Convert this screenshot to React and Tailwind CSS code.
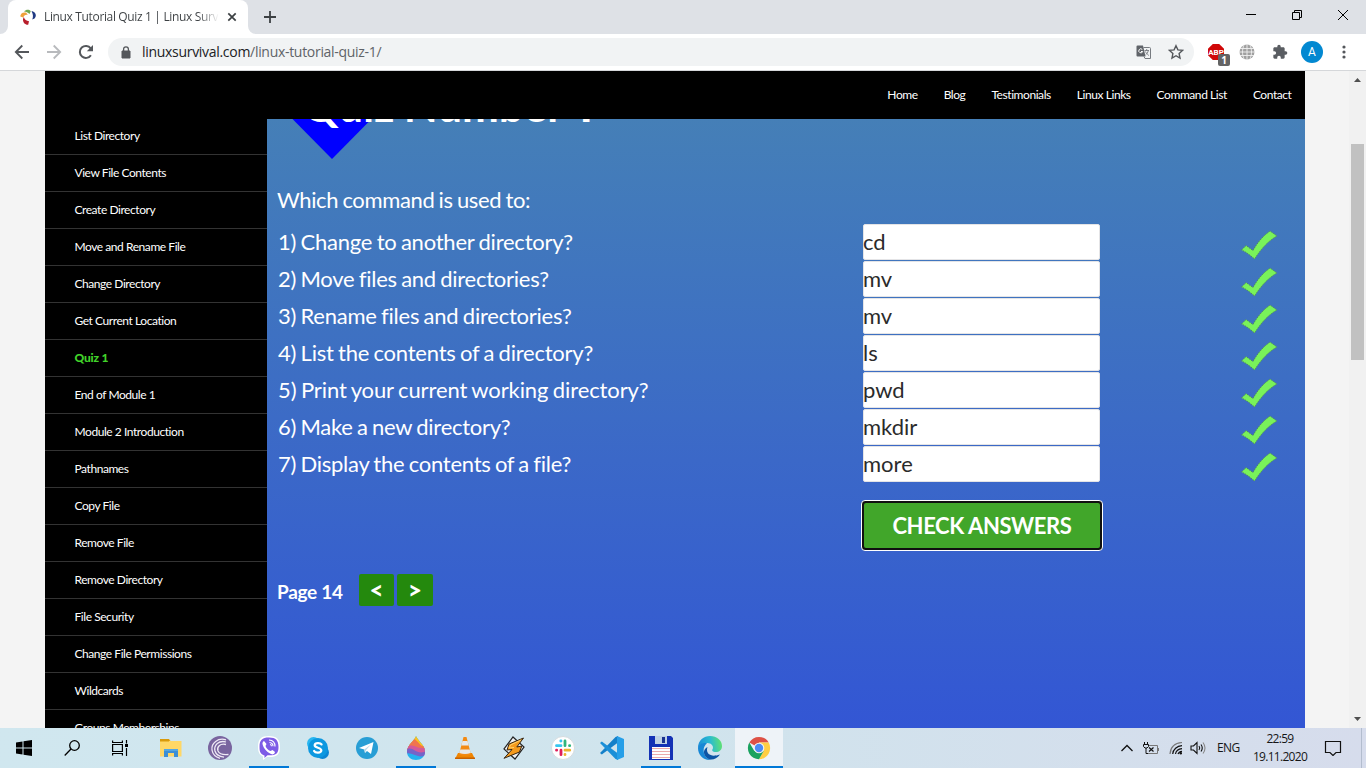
import React from "react";

const lessons = [
  "List Directory", "View File Contents", "Create Directory", "Move and Rename File", "Change Directory",
  "Get Current Location", "Quiz 1", "End of Module 1", "Module 2 Introduction", "Pathnames", "Copy File",
  "Remove File", "Remove Directory", "File Security", "Change File Permissions", "Wildcards", "Groups Memberships",
];

const questions = [
  ["1) Change to another directory?", "cd", "tracking-[-0.23px]"],
  ["2) Move files and directories?", "mv", "tracking-[-0.26px]"],
  ["3) Rename files and directories?", "mv", "tracking-[-0.24px]"],
  ["4) List the contents of a directory?", "ls", "tracking-[-0.23px]"],
  ["5) Print your current working directory?", "pwd", "tracking-[-0.11px]"],
  ["6) Make a new directory?", "mkdir", "tracking-[-0.26px]"],
  ["7) Display the contents of a file?", "more", "tracking-[-0.26px]"],
];

function TabStrip() {
  return (
    <div className="flex h-[34px] shrink-0 bg-[#dee1e6]">
      <div className="flex h-full w-[248px] items-end">
        <svg className="h-2 w-2 shrink-0" viewBox="0 0 8 8"><path d="M8 0v8H0a8 8 0 0 0 8-8z" fill="#fff" /></svg>
        <div className="flex h-[34px] w-60 items-center rounded-t-lg bg-white pl-3">
          <svg className="h-4 w-4 shrink-0" viewBox="0 0 16 16">
            <path d="M4 2.600C6 .4 9 .3 10.800 2.200L9.500 5C8 3.400 6 2.800 4 2.600z" fill="#72a84f" />
            <path d="M.3 7.500C.3 4.500 3 2.800 6 3.600l1.800 2.200C5.500 5.200 4 6.200 3.200 8.500z" fill="#f0a13c" />
            <path d="M11.500 2.300c3 0 4.500 2.400 4.300 4.700-.3 2-1.900 3.300-3.500 3.400C13.500 7.500 13 5 11.500 2.300z" fill="#203a83" />
            <path d="M3.800 8c.7 2.600 2.700 4 5.200 4.300l-.8 3.500C5 16 2.700 13.500 3 10z" fill="#b81e2c" />
          </svg>
          <div className="ml-2 w-[175px] overflow-hidden whitespace-nowrap bg-gradient-to-r from-[#3c4043] from-[88%] to-transparent bg-clip-text font-['Open_Sans',sans-serif] text-[12px] leading-5 tracking-[-0.35px] text-transparent">Linux Tutorial Quiz 1 | Linux Surviv</div>
          <svg className="ml-2 h-[10px] w-[10px]" viewBox="0 0 10 10"><path d="M1.300 1.300l7.400 7.400M8.700 1.300L1.300 8.700" stroke="#3c4043" strokeWidth="1.7" /></svg>
        </div>
      </div>
      <div className="flex h-full w-2 items-end"><svg className="h-2 w-2" viewBox="0 0 8 8"><path d="M0 0v8h8a8 8 0 0 1-8-8z" fill="#fff" /></svg></div>
      <svg className="ml-[7px] mt-[10px] h-[14px] w-[14px]" viewBox="0 0 14 14"><path d="M7 1v12M1 7h12" stroke="#3c4043" strokeWidth="1.8" /></svg>
      <div className="ml-auto flex h-[29px] w-[138px] items-center justify-between">
        <svg className="ml-[17px] h-3 w-3" viewBox="0 0 12 12"><path d="M1 5.500h10" stroke="#000" /></svg>
        <svg className="h-3 w-3" viewBox="0 0 12 12" fill="none" stroke="#000"><path d="M1.500 3.500h7v7h-7zM3.500 3.500v-2h7v7h-2" /></svg>
        <svg className="mr-[17px] h-3 w-3" viewBox="0 0 12 12" stroke="#000"><path d="M1 1l10 10M11 1L1 11" /></svg>
      </div>
    </div>
  );
}

function Toolbar() {
  return (
    <div className="flex h-[37px] shrink-0 items-start border-b border-[#d5d7da] bg-white pt-1">
      <div className="flex h-7 w-[108px] items-center pl-[14px]">
        <svg className="h-4 w-4" viewBox="0 0 16 16" fill="none" stroke="#54575b" strokeWidth="1.8"><path d="M15 8H2M8.300 1.500L1.800 8l6.500 6.500" /></svg>
        <svg className="ml-4 h-4 w-4" viewBox="0 0 16 16" fill="none" stroke="#b8babd" strokeWidth="1.8"><path d="M1 8h13M7.700 1.500L14.200 8l-6.500 6.500" /></svg>
        <svg className="ml-4 h-4 w-4" viewBox="0 0 16 16"><path d="M12.900 11.200A6 6 0 1 1 12.700 4.400" fill="none" stroke="#54575b" strokeWidth="2" /><path d="M15 1v6.200H8.800z" fill="#54575b" /></svg>
      </div>
      <div className="flex h-7 w-[1086px] items-center rounded-full bg-[#f1f3f4] pl-[13px]">
        <svg className="h-[13px] w-[10px]" viewBox="0 0 10 13"><path d="M1 5h8v7H1z" fill="#54575b" stroke="#54575b" strokeLinejoin="round" /><path d="M2.600 5V3.200a2.400 2.400 0 0 1 4.800 0V5" fill="none" stroke="#54575b" strokeWidth="1.300" /></svg>
        <div className="ml-[11px] whitespace-nowrap font-['Open_Sans',sans-serif] text-[14px] leading-5 tracking-[-0.3px] text-[#5f6368]"><span className="text-[#202124]">linuxsurvival.com</span>/linux-tutorial-quiz-1/</div>
        <svg className="ml-auto h-[15px] w-[15px]" viewBox="0 0 15 15">
          <path d="M1.500.5H7l2.500 11H1.500a1 1 0 0 1-1-1v-9a1 1 0 0 1 1-1z" fill="#5f6368" />
          <path d="M7.500 2.500h6a1 1 0 0 1 1 1v10h-5.500l-1-2" fill="none" stroke="#777b80" />
          <path d="M6.300 4.500A2 2 0 1 0 6.700 6.500H5" fill="none" stroke="#fff" />
          <path d="M8.500 5.500H13M10.700 4v1.500M12.300 5.500c-.3 2-1.600 3.500-2.800 4.500M9.500 6.500c.5 1.500 2 3 3.300 4" fill="none" stroke="#777b80" strokeWidth=".9" />
        </svg>
        <svg className="ml-[17px] mr-[10px] h-4 w-4" viewBox="0 0 16 16"><path d="M8 1.700l1.900 4.200 4.600.5-3.400 3.100.9 4.500-4-2.300L4 14l.9-4.500-3.400-3.100 4.600-.5z" fill="none" stroke="#54575b" strokeWidth="1.400" /></svg>
      </div>
      <div className="flex h-7 flex-1 items-center pl-[13px]">
        <div className="relative h-[18px] w-[18px]">
          <svg className="h-[18px] w-[18px]" viewBox="0 0 18 18"><path d="M5.800 1h6.400L17 5.800v6.400L12.200 17H5.800L1 12.200V5.800z" fill="#d00808" /><text x="9" y="11.500" textAnchor="middle" fontFamily="Roboto" fontWeight="700" fontSize="8" fill="#fff">ABP</text></svg>
          <div className="absolute left-[11px] top-[11px] flex h-3 w-3 items-center justify-center rounded-[2px] bg-[#646464] font-['Open_Sans',sans-serif] text-[10px] font-bold leading-none text-white">1</div>
        </div>
        <svg className="ml-[14px] h-4 w-4" viewBox="0 0 16 16"><circle cx="8" cy="8" r="7.500" fill="#a0a0a0" /><path d="M8 0v16M1 4.500h14M0 8h16M1 11.500h14M5 1.200c-2 4-2 9.600 0 13.600M11 1.200c2 4 2 9.600 0 13.600" fill="none" stroke="#f0f0f0" strokeWidth=".9" /></svg>
        <svg className="ml-[17px] h-4 w-4" viewBox="0 0 24 24"><path fill="#5a5d62" d="M20.500 11H19V7c0-1.100-.9-2-2-2h-4V3.500a2.500 2.500 0 0 0-5 0V5H4c-1.100 0-2 .9-2 2v3.800h1.500a2.700 2.700 0 0 1 0 5.400H2V20c0 1.100.9 2 2 2h3.800v-1.500a2.700 2.700 0 0 1 5.400 0V22H17c1.100 0 2-.9 2-2v-4h1.500a2.500 2.500 0 0 0 0-5z" /></svg>
        <div className="ml-[13px] flex h-[22px] w-[22px] items-center justify-center rounded-full bg-[#0288d1] font-['Roboto',sans-serif] text-[12px] text-white">A</div>
        <svg className="ml-[19px] h-[14px] w-1" viewBox="0 0 4 14" fill="#54575b"><circle cx="2" cy="2" r="1.600" /><circle cx="2" cy="7" r="1.600" /><circle cx="2" cy="12" r="1.600" /></svg>
      </div>
    </div>
  );
}

function Check() {
  return (
    <svg className="h-[30px] w-[38px]" viewBox="0 0 38 30">
      <path d="M1.500 20L6 15.500l7 5C17 13 23 6 30 1l7 5C28 11 21 19 14.500 29 10 25 6 22 1.500 20z" fill="#79f25a" stroke="#4f8b56" strokeWidth=".9" strokeDasharray="1.500 1" />
    </svg>
  );
}

function Lesson() {
  return (
    <main className="relative h-full flex-1 overflow-hidden bg-gradient-to-b from-[#457fb7] via-[#3b68c8] via-[56%] to-[#3356d4] pl-[10px] text-white">
      <svg className="absolute left-[25px] top-0 h-10 w-20" viewBox="0 0 80 40"><path d="M.5 0h79L40 40z" fill="#00f" /></svg>
      <h1 className="relative -mt-[39px] ml-[26px] h-[51px] whitespace-nowrap text-[44px] font-bold leading-[50px] [word-spacing:-1.5px]">Quiz Number <span className="font-['Open_Sans',sans-serif] text-[42px] leading-none">1</span></h1>
      <p className="mt-[54px] text-[22px] leading-[30px] tracking-[-0.37px] [word-spacing:-1px]">Which command is used to:</p>
      <div className="mt-[8px]">
        {questions.map(([q, a, tracking]) => (
          <div key={q} className="flex h-[37px] items-center">
            <div className={"w-[585px] whitespace-nowrap pl-px text-[22px] [word-spacing:-1px] " + tracking}>{q}</div>
            <div className="h-full w-[238px] pl-px pt-px"><div className="flex h-full w-full items-center rounded-[2px] border border-[#e4e4e6] bg-white pb-[2px] text-[22px] text-[#2b2b2b]"><span className="-ml-px">{a}</span></div></div>
            <div className="ml-[140px] pt-[6px]"><Check /></div>
          </div>
        ))}
      </div>
      <button className="ml-[584px] mt-[18px] flex h-[51px] w-[242px] items-center justify-center rounded-[4px] border border-white bg-[#101010] p-[2px]">
        <span className="flex h-full w-full items-center justify-center rounded-[2px] bg-[#41a62a] text-[22px] font-bold tracking-[-0.4px]">CHECK ANSWERS</span>
      </button>
      <div className="mt-[23px] flex h-8 items-center font-bold">
        <span className="w-[82px] pt-1 text-[19px] leading-7 tracking-[-0.3px]">Page 14</span>
        <div className="flex gap-[3px]">
          <span className="flex h-8 w-[35px] items-center justify-center rounded-[2px] bg-[#24890d] text-[24px] font-black">&lt;</span>
          <span className="flex h-8 w-9 items-center justify-center rounded-[2px] bg-[#24890d] text-[24px] font-black">&gt;</span>
        </div>
      </div>
    </main>
  );
}

function Page() {
  return (
    <div className="flex h-[657px] shrink-0 bg-[#f4f4f4] pl-[45px]">
      <div className="flex w-[1260px] flex-col font-['Lato',sans-serif]">
        <nav className="flex h-12 shrink-0 items-center justify-end gap-[26px] bg-black pr-[13.5px] text-[12px] tracking-[-0.43px] text-white">
          {["Home", "Blog", "Testimonials", "Linux Links", "Command List", "Contact"].map((t) => <span key={t}>{t}</span>)}
        </nav>
        <div className="flex h-[609px]">
          <aside className="h-full w-[222px] overflow-hidden bg-black text-[12px] leading-5 tracking-[-0.44px] text-white">
            <div className="-mt-px">
              {lessons.map((t) => (
                <div key={t} className={t === "Quiz 1" ? "flex h-[37px] items-center border-b border-[#333] pl-[29.5px] font-black tracking-[-0.2px] text-[#41d32a]" : "flex h-[37px] items-center border-b border-[#333] pl-[29.5px]"}>{t}</div>
              ))}
            </div>
          </aside>
          <Lesson />
        </div>
      </div>
      <div className="ml-11 flex w-[17px] flex-col items-center bg-[#f1f1f1]">
        <svg className="mt-[7px] h-1 w-[7px]" viewBox="0 0 7 4"><path d="M0 4L3.500 0 7 4z" fill="#505050" /></svg>
        <div className="mt-[62px] h-[216px] w-[13px] bg-[#c1c1c1]" />
        <svg className="mb-[7px] mt-auto h-1 w-[7px]" viewBox="0 0 7 4"><path d="M0 0h7L3.500 4z" fill="#505050" /></svg>
      </div>
    </div>
  );
}

const icons = {
  explorer: <><path d="M1 3h9l1.500 2H22v15H1z" fill="#e8a317" /><path d="M1 5h21.500v15.500H1z" fill="#ffd766" /><path d="M1 3h9v2.500H1z" fill="#d99a0b" /><path d="M5 13h14v8h-4v-4H9v4H5z" fill="#3c8fd6" /><path d="M5 13h14v2H5z" fill="#53a6e2" /></>,
  torrent: <><circle cx="12" cy="12" r="12" fill="#79649f" /><g fill="none" stroke="#eee8f5" strokeWidth="1.300"><path d="M18 3.800C10 1.500 3 7 4 14c.6 4 3.500 7 8 8.300" /><path d="M18 6C11 4 5.500 9 7 15c1 3.600 4.500 5.500 9 6.200" /><path d="M18 8.500C12 7 8.500 11 10 15c1.300 3 5 4 10.500 3.500" /></g></>,
  viber: <><path d="M12 0C4 0 1 3 1 11c0 5 1.500 8 5 9.500V24l4-3c10 .5 13-2.500 13-10S20 0 12 0z" fill="#fff" /><path d="M12 1.500C5 1.500 2.500 4 2.500 11c0 5 1 7 5 8.500V22l3-2.700c9 .3 11-1.800 11-8.300S19 1.500 12 1.500z" fill="#7d5be6" /><path d="M7 5l2.500 3-1 2c1 2.500 2.500 4 5 5l2-1 2.500 2c-.5 2-2 3-4 2C9 15.500 6.500 12 5.500 8 5.300 6.500 6 5.500 7 5z" fill="#fff" /><path d="M12 4c4 .2 6 2.500 6 6.500M12.500 6.500c2.500.2 3.500 1.500 3.500 3.800M13 8.500q1.500.2 1.500 1.700" fill="none" stroke="#fff" strokeWidth="1.100" /></>,
  skype: <><circle cx="7.500" cy="7.500" r="6.500" fill="#28b6f0" /><circle cx="16.500" cy="16.500" r="6.500" fill="#0b86d4" /><circle cx="12" cy="12" r="10" fill="#0c98e0" /><path d="M15.500 8.400c-1-1.600-6.500-2-6.800.8-.3 3.100 6.800 2 6.600 5.300-.2 2.800-6 2.800-7.200.5" fill="none" stroke="#fff" strokeWidth="2.300" strokeLinecap="round" /></>,
  telegram: <><circle cx="12" cy="12" r="11" fill="#289ed5" /><path d="M4 12L18.500 6 16 18l-4-3-2 2-.7-3.500z" fill="#fff" /><path d="M9.300 13.500L16 8.500 11 14l-1 3z" fill="#b5d6e8" /></>,
  vlc: <><path d="M5 17h14l3 6H2z" fill="#ef8500" /><path d="M10.500 1h3L18 18.500q-6 2.500-12 0z" fill="#f38a13" /><path d="M9.500 5h5l1.200 4.500H8.300zM7.300 13.500h9.400l1 3.500q-5.700 2-11.400 0z" fill="#e7e8e9" /><path d="M2 21.500h20V23H2z" fill="#c86000" /></>,
  winamp: <><path d="M11 1l11 10-9 12L2 13z" fill="#f2f2f2" stroke="#222" strokeWidth="1.200" /><path d="M21.500 2L7 8l-2 6 5-.5-8 8.800L17.500 16l2.300-6-5 1z" fill="#f59a1c" stroke="#352512" /><path d="M19 4L8.500 9 7 12l5-.5" fill="none" stroke="#ffd16b" /></>,
  slack: <><circle cx="12" cy="12" r="11.500" fill="#fff" stroke="#d0d5d8" strokeWidth=".8" /><g strokeWidth="2.800" strokeLinecap="round"><path d="M10 5h-.2M10 9.700H5.500" stroke="#36c5f0" /><path d="M14 5v4.700M18.700 9.700h-.2" stroke="#2eb67d" /><path d="M14 14.200h4.700M14 18.700v-.2" stroke="#ecb22e" /><path d="M10 14.200v4.500M5.500 14.200h.2" stroke="#e01e5a" /></g></>,
  vscode: <><path d="M0 17l1.800 1.600L18 6.500V0L15.500 1z" fill="#1480c9" /><path d="M0 7l1.800-1.600L18 17.500V24l-2.500-1z" fill="#1a8fd8" /><path d="M17 0l7 3v18l-7 3z" fill="#269fe8" /></>,
  floppy: <><path d="M0 0h22l2 2v22H0z" fill="#1432b5" /><path d="M3 11h18v12H3z" fill="#fff" /><path d="M3 12.500h18M3 15.500h18M3 18.500h18M3 21.500h18" stroke="#ecaaab" /><path d="M6 0h12v8H6z" fill="#bfd2e4" /><path d="M13 1h3v6h-3z" fill="#1b348f" /></>,
};

function TaskIcon({ name }) {
  return <svg className="h-6 w-6" viewBox="0 0 24 24">{icons[name]}</svg>;
}

function Paint() {
  return (
    <svg className="h-6 w-6" viewBox="0 0 24 24">
      <defs><clipPath id="drop"><path d="M12 0c-1 4-9 9-9 15.500C3 21 7 24 12 24s9-3 9-8.500C21 9 14 5 12 0z" /></clipPath></defs>
      <g clipPath="url(#drop)">
        <path d="M0 0h24v24H0z" fill="#25b2f0" />
        <path d="M8 0h14v13H3z" fill="#fdc31d" />
        <path d="M10 3L3 10v4c8-4 10 3 19-1v-3C16 12 15 5 10 3z" fill="#f0744f" />
        <path d="M3 11c8-5 10 4 19 0v7C12 21 10 10 0 16z" fill="#d4599a" />
        <path d="M2 13.500c8-4 9 6 20 2v4C12 23 8 15 1 18z" fill="#7763c8" />
      </g>
    </svg>
  );
}

function Edge() {
  return (
    <svg className="h-6 w-6" viewBox="0 0 24 24">
      <defs><linearGradient id="sea" x1="0" y1=".3" x2="1" y2=".2"><stop stopColor="#1b8fd8" /><stop offset=".5" stopColor="#2abbd0" /><stop offset="1" stopColor="#63e36b" /></linearGradient></defs>
      <path d="M0 12C0 4 6 0 12 0c7 0 12 4.500 12 10 0 4-3 6-6 6-3.500 0-4.500-1.500-3.300-3C16 10 13 7 9.500 7 5 7 1 9 0 12z" fill="url(#sea)" />
      <path d="M0 12C.5 8 5 6.500 9 7.200 6 10 5 13 6 17c1 4 4 6.500 7.500 6.800C6 25 0 19.500 0 12z" fill="#1787d5" />
      <path d="M9.500 11c-2 6 2 11 12.500 7.500C18 24 12 25 8.500 21.500 4.500 17.500 5.500 13 9.500 11z" fill="#0c55a5" />
    </svg>
  );
}

function Chrome() {
  return (
    <svg className="h-6 w-6" viewBox="0 0 24 24">
      <path d="M12 12L2.300 6.500A11.200 11.200 0 0 1 21.700 6.500H12z" fill="#de5146" />
      <path d="M12 6.500h9.700A11.200 11.200 0 0 1 12 23.200l4.800-8.500z" fill="#ffce44" />
      <path d="M2.300 6.500A11.200 11.200 0 0 0 12 23.200l4.800-8.500L7.200 14.700z" fill="#1aa260" />
      <circle cx="12" cy="12" r="5.300" fill="#f3f3f3" /><circle cx="12" cy="12" r="4.200" fill="#4c8bf5" />
    </svg>
  );
}

const apps = ["explorer", "torrent", "viber", "skype", "telegram", "paint", "vlc", "winamp", "slack", "vscode", "floppy", "edge", "chrome"];

function Taskbar() {
  return (
    <div className="flex h-10 shrink-0 bg-gradient-to-r from-[#d0e7ef] via-[#d0e4ed] to-[#d6dcec]">
      <div className="flex h-full w-[147px] items-center">
        <svg className="ml-4 h-4 w-4" viewBox="0 0 16 16"><path d="M0 2.400L6.500 1.500V7.500H0zM7.500 1.300L16 0v7.500H7.500zM0 8.500h6.500v6L0 13.600zM7.500 8.500H16V16l-8.500-1.300z" /></svg>
        <svg className="ml-8 h-4 w-4" viewBox="0 0 16 16" fill="none" stroke="#000" strokeWidth="1.300"><circle cx="10.500" cy="5.500" r="4.800" /><path d="M7 9L.7 15.500" /></svg>
        <svg className="ml-8 h-4 w-4" viewBox="0 0 16 16" fill="none" stroke="#000" strokeWidth="1.200"><path d="M.6.5v2h9.800v-2M.6 15.500v-2h9.800v2M.6 4.500h9.800v7H.6zM14.500 0v3.500M14.500 8v8" /><path d="M13 4h3v3h-3z" fill="#000" stroke="none" /></svg>
      </div>
      <div className="flex h-full gap-px">
        {apps.map((name) => (
          <div key={name} className={name === "chrome" ? "flex h-10 w-12 flex-col items-center bg-[#eef3f8]" : "flex h-10 w-12 flex-col items-center"}>
            <div className="flex h-[38px] items-center pt-[2px]">
              {name === "paint" ? <Paint /> : name === "edge" ? <Edge /> : name === "chrome" ? <Chrome /> : <TaskIcon name={name} />}
            </div>
            {["viber", "paint", "floppy"].includes(name) && <div className="h-[2px] w-10 bg-[#0078d7]" />}
            {name === "chrome" && <div className="h-[2px] w-12 bg-[#0078d7]" />}
          </div>
        ))}
      </div>
      <div className="ml-auto flex h-full w-[246px] items-center font-['Open_Sans',sans-serif] text-[12px] text-[#161616]">
        <svg className="h-[14px] w-[14px]" viewBox="0 0 14 14"><path d="M1.500 10L7 4.500l5.500 5.500" fill="none" stroke="#111" strokeWidth="1.300" /></svg>
        <svg className="ml-[9px] h-[14px] w-4" viewBox="0 0 16 14" fill="none" stroke="#111"><path d="M1.500 1v2.500M4.500 1v2.500M.5 3.500h5v2L4 7H2L.5 5.500zM3 7v5.500h2" /><path d="M6 4.500h8.500v8H5M15.500 7v3" stroke="#777" /><path d="M6 6.500l4.500 4M10.500 6.500L6 10.500" strokeWidth="1.200" /></svg>
        <svg className="ml-[10px] h-[14px] w-[14px]" viewBox="0 0 14 14" fill="none" stroke="#111" strokeWidth="1.200"><path d="M1 13C1.500 6 6 2 13 1.500" stroke="#777" /><path d="M3.700 13C4 8.500 8 5 13 4.700M6.500 13c.5-3 3-5 6.500-5.300M9 13c.5-1.500 2-2.500 4-2.700" /><circle cx="11.800" cy="12.300" r="1.200" fill="#111" stroke="none" /></svg>
        <svg className="ml-[7px] h-[14px] w-4" viewBox="0 0 16 14" fill="none" stroke="#111" strokeWidth="1.100"><path d="M1 5h2.500L7 1.500v11L3.500 9H1zM9 5q1.500 2 0 4M11 3.500q2.500 3.500 0 7" /><path d="M13 1.500q4 5.500 0 11" stroke="#888" /></svg>
        <span className="ml-[11px] w-[25px] tracking-[-0.6px]">ENG</span>
        <div className="ml-[3px] flex w-[70px] flex-col items-center leading-[18px] tracking-[-0.7px]"><span>22:59</span><span>19.11.2020</span></div>
        <svg className="ml-[9px] h-4 w-[18px]" viewBox="0 0 18 16"><path d="M1.500 1.500h15v11H12l-3 3-3-3H1.500z" fill="none" stroke="#111" strokeWidth="1.200" /></svg>
        <div className="ml-auto mr-[4px] h-full w-px bg-[#b3bdce]" />
      </div>
    </div>
  );
}

export default function App() {
  return (
    <div className="flex h-[768px] w-[1366px] flex-col overflow-hidden bg-white">
      <TabStrip />
      <Toolbar />
      <Page />
      <Taskbar />
    </div>
  );
}
